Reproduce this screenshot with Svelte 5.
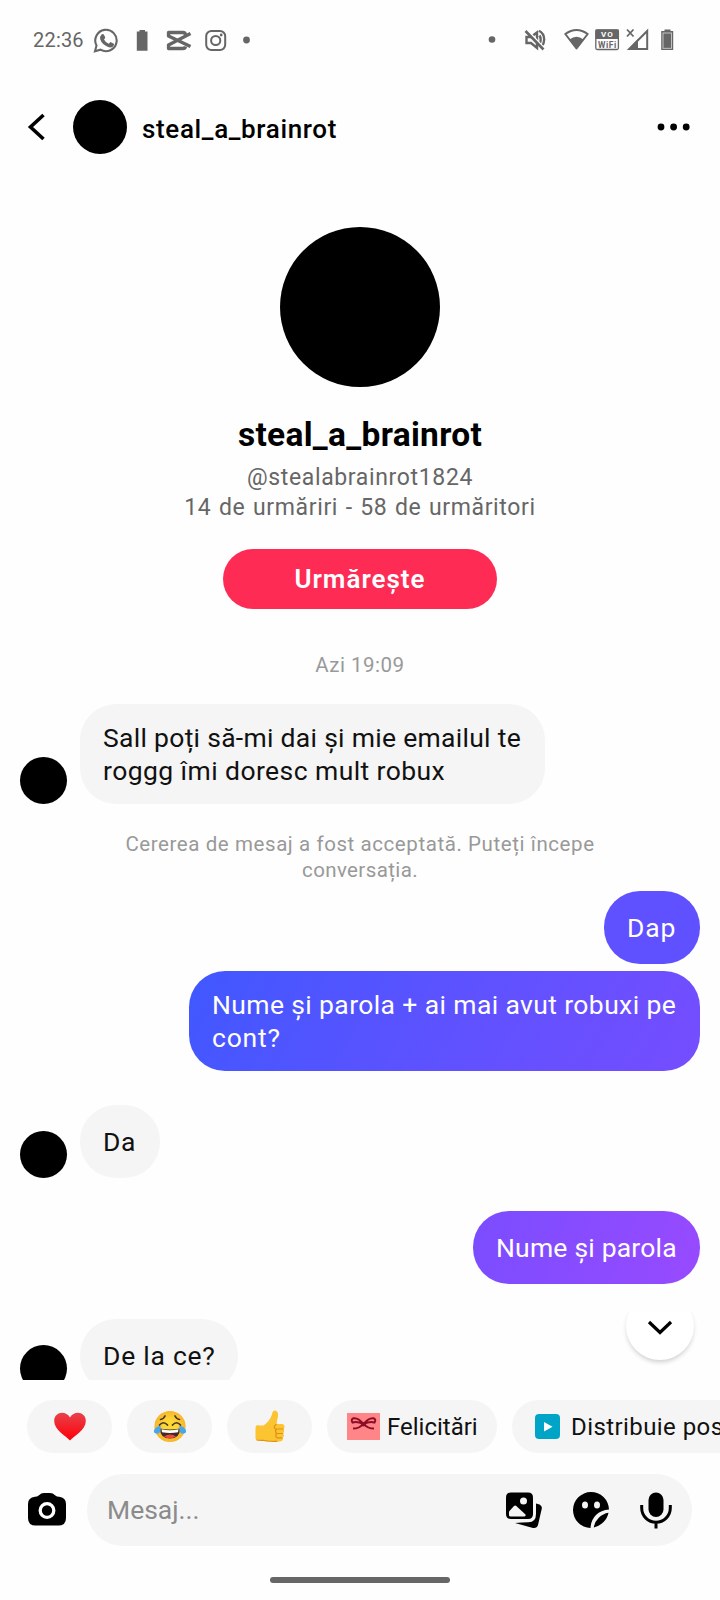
<script>
  const quick = ['heart', 'joy', 'thumb'];
</script>

{#snippet mine(text, kind)}
  <div class="row right"><div class="bubble mine {kind}"><span>{text}</span></div></div>
{/snippet}

<div class="screen">
  <header class="status">
    <span class="time">22:36</span>
    <svg class="i-left" width="160" height="26" viewBox="92 27 160 26" fill="none" stroke="#666">
      <path d="M95 51.200L96.500 45.500A10.700 10.700 0 1 1 100.500 49.700Z" stroke-width="2.100" />
      <path d="M101.500 34.600q1.300-1.300 2.300-.2l1.400 2.900q.2.700-1.200 2.200 1.600 3.100 4.800 4.300l1.600-1.700 3.500 1.700q.7.700-.8 2.700-2.300 1.700-5.600.2-5.600-2.500-7.300-7.500-.5-2.700 1.300-4.600z" fill="#666" stroke="none" />
      <path d="M139.500 31.500v-1.600h5.500v1.600h2.500v19.200h-10.700v-19.200z" fill="#666" stroke="none" />
      <path d="M190.500 33.500L168.500 45v3.500h14.500q2 0 2.500-2M190.500 46.500L168.500 36v-3.500h14.500q2 0 2.500 2" stroke-width="3.300" stroke-linejoin="round" />
      <rect x="206.200" y="31" width="19" height="19" rx="5.200" stroke-width="2" />
      <circle cx="215.700" cy="40.500" r="4.600" stroke-width="2" /><circle cx="221.200" cy="35" r="1.400" fill="#666" stroke="none" />
      <circle cx="246.500" cy="40" r="3.400" fill="#666" stroke="none" />
    </svg>
    <svg class="i-right" width="190" height="26" viewBox="487 27 190 26" fill="none" stroke="#666">
      <circle cx="492" cy="39.500" r="3.300" fill="#666" stroke="none" />
      <path d="M526.500 37h4.500l6-4.500v15.500l-6-5h-4.500zM539.500 35.500q2.500 4 0 8.500M539 30.800q5 2.500 5.200 8.700 0 4-2.500 6.500" stroke-width="2.400" />
      <path d="M527 30l18 19" stroke="#fefefe" stroke-width="2" /><path d="M525.500 31l18 18.500" stroke-width="2.600" />
      <path d="M565.300 34Q576.500 26 587.700 34L576.500 48.500z" stroke-width="2" stroke-linejoin="round" />
      <path d="M569.500 39.500q7-5.500 14 0l-7 9.500z" fill="#666" stroke="none" />
      <rect x="595.800" y="30" width="22.600" height="19.500" rx="1.500" stroke-width="1.300" />
      <path d="M595.500 29.500h23.200v9.500h-23.200z" fill="#666" stroke="none" />
      <text x="607.400" y="37.300" fill="#fff" stroke="none" class="vo">VO</text>
      <text x="607.400" y="47.800" fill="#666" stroke="none" class="wf">WiFi</text>
      <path d="M647.200 31v18h-18z" stroke-width="2" /><path d="M628 50l10-11v11z" fill="#666" stroke="none" />
      <path d="M627 29.500l6.500 7M633.500 29.500l-6.500 7" stroke-width="1.800" />
      <path d="M664.500 31v-1.500h6v1.500h2.700v19h-12v-19z" fill="#666" stroke="none" /><rect x="663" y="33" width="8.500" height="15.300" stroke="#ccc" stroke-width=".9" />
    </svg>
  </header>

  <nav class="top">
    <svg class="back" width="20" height="30" viewBox="0 0 20 30"><path d="M17.500 3L4.500 15l13 12" fill="none" stroke="#000" stroke-width="3.600" /></svg>
    <i class="avatar head"></i>
    <b class="title">steal_a_brainrot</b>
    <svg class="more" width="34" height="8" viewBox="0 0 34 8"><circle cx="4" cy="4" r="3.400" /><circle cx="16.600" cy="4" r="3.400" /><circle cx="29.200" cy="4" r="3.400" /></svg>
  </nav>

  <main>
    <section class="profile">
      <i class="avatar big"></i>
      <h1>steal_a_brainrot</h1>
      <p class="handle">@stealabrainrot1824</p>
      <p class="counts">14 de urmăriri - 58 de urmăritori</p>
      <button class="follow">Urmărește</button>
      <p class="date">Azi 19:09</p>
    </section>

    <div class="row">
      <i class="avatar small"></i>
      <div class="bubble w-sall"><span class="m1">Sall poți să-mi dai și mie emailul te</span><br /><span class="m2">roggg îmi doresc mult robux</span></div>
    </div>
    <p class="notice"><span class="n1">Cererea de mesaj a fost acceptată. Puteți începe</span><br /><span class="n2">conversația.</span></p>
    {@render mine('Dap', 'dap')}
    <div class="row right second"><div class="bubble mine long"><span>Nume și parola + ai mai avut robuxi pe</span><br /><span class="cont">cont?</span></div></div>
    <div class="row da"><i class="avatar small"></i><div class="bubble w-da">Da</div></div>
    {@render mine('Nume și parola', 'np')}
    <div class="row last"><i class="avatar small"></i><div class="bubble w-ce">De la ce?</div></div>
    <div class="jump"><svg width="28" height="18" viewBox="0 0 28 18"><path d="M3 3l11 10.500L25 3" fill="none" stroke="#000" stroke-width="3.200" /></svg></div>
  </main>

  <div class="chips">
    {#each quick as q}
      <button class="chip emoji">
        <svg width="36" height="36" viewBox="0 0 36 36">
          {#if q === 'heart'}
            <defs><linearGradient id="hg" x2="0" y2="1"><stop stop-color="#e8414b" /><stop offset="1" stop-color="#ff0008" /></linearGradient></defs>
            <path d="M18 31.500C14 27 2.200 21 2.200 12 2.200 3 13.500.8 18 8.500 22.500.8 33.800 3 33.800 12 33.800 21 22 27 18 31.500z" fill="url(#hg)" />
          {:else if q === 'joy'}
            <defs><radialGradient id="jg"><stop offset=".4" stop-color="#fdd835" /><stop offset="1" stop-color="#f6b52c" /></radialGradient></defs>
            <circle cx="18" cy="17.500" r="15.600" fill="url(#jg)" />
            <path d="M8.500 10.500q3-.3 4.500-3.500M27.500 10.500q-3-.3-4.500-3.500M7.500 16q4-4.500 8 0M20.500 16q4-4.500 8 0" fill="none" stroke="#4b3426" stroke-width="1.700" stroke-linecap="round" />
            <path d="M8 19.500q10 2 20 0 0 10-10 10T8 19.500z" fill="#422b27" /><path d="M9.500 20.200q8.500 2 17 0l-.5 3q-8 1.500-16 0z" fill="#fff" /><path d="M12 27.500q6-4 12 0-6 4-12 0z" fill="#ef4b38" />
            <path d="M8.500 16.500q1 8-3.500 8.300-4.500-.5-2.500-4.500 1.500-2.500 6-3.800zM27.500 16.500q-1 8 3.500 8.300 4.500-.5 2.500-4.500-1.500-2.500-6-3.800z" fill="#47a7ee" />
          {:else}
            <path d="M3.500 19q0-2.500 2-3 3 .8 6 .5 6-4 8.500-11 .5-4 3-4 3.500.5 3 5.500l-1.500 8h5.500q2.700.3 2.500 3-.1 1.300-.8 2 1.300 2.300-.3 4.300 1.200 2.500-.5 4.300.7 3.500-3 3.900H17q-4.500 0-7-1.200H5.500q-2 0-2-2z" fill="#fdc432" />
            <path d="M24.500 15l-2 2q-1 3 2 3h6.700M31.500 20h-7q-2 2.200 0 4.500h6.500M24.500 24.500q-1.700 2 .3 4.300h5.500M4.500 31q3 .5 7 .3 3 1.200 14 1" fill="none" stroke="#dd9217" stroke-width="1.200" />
          {/if}
        </svg>
      </button>
    {/each}
    <button class="chip gift">
      <svg width="33" height="27" viewBox="0 0 33 27"><path d="M0 0h33v27H0z" fill="#ff8589" /><path d="M16.500 11Q11 4.500 6.500 5.300 3.500 6.500 5.500 9.500 10 8 16.500 11zM16.500 11Q22 4.500 26.500 5.300 29.500 6.500 27.500 9.500 23 8 16.500 11zM15.500 11.500q-3 4-9.500 4M17.500 11.500q3 4 9.500 4" fill="none" stroke="#8e0d25" stroke-width="2" /><circle cx="16.500" cy="11.200" r="2.300" fill="#8e0d25" /></svg>
      <span>Felicitări</span>
    </button>
    <button class="chip share">
      <svg width="25" height="25" viewBox="0 0 25 25"><rect width="25" height="25" rx="4" fill="#00a4c6" /><path d="M9 8v9.500l8.500-4.700z" fill="#fff" /></svg>
      <span>Distribuie pos</span>
    </button>
  </div>

  <footer class="composer">
    <svg class="camera" width="38" height="33" viewBox="0 0 38 33"><path d="M0 11q0-6.500 7-7.200 2 0 4-1.600Q13 0 16 0h6q3 0 5 2.200 2 1.600 4 1.600 7 .7 7 7.200v14q0 7.500-7.500 7.500h-23Q0 32.500 0 25z" /><circle cx="19" cy="17.500" r="6.800" fill="none" stroke="#fff" stroke-width="3.300" /></svg>
    <div class="field">
      <span class="ph">Mesaj...</span>
      <svg width="36" height="37" viewBox="0 0 36 37">
        <path d="M5 .5h17q5 0 5 5V22q0 5-5 5H5q-5 0-5-5V5.500q0-5 5-5z" /><circle cx="17.500" cy="9" r="3.500" fill="#f5f5f5" /><path d="M3 23.500v-4l5-5.500q1.200-1 2.300 0l9.200 8.500q.7 1.500-1 2H4.500q-1 0-1.500-1z" fill="#f5f5f5" />
        <path d="M30 11.500l3.500 1q2.700 1.300 2.300 4L32 33q-1 3.500-5 3L9 31q7-.5 13.500-.7Q30 30 30 22z" />
      </svg>
      <svg width="36" height="36" viewBox="0 0 36 36"><path d="M17.500 36A18 18 0 1 1 36 17.500q-8 .5-13 5.500t-5.500 13z" /><path d="M20.800 35.500q.7-5.500 5-9.700t9.700-5q-1 5.500-5.200 9.500t-9.500 5.200z" /><ellipse cx="12" cy="13" rx="3" ry="3.500" fill="#f5f5f5" /><ellipse cx="24" cy="13" rx="3" ry="3.500" fill="#f5f5f5" /></svg>
      <svg width="32" height="37" viewBox="0 0 32 37"><rect x="8.500" y=".5" width="15" height="24.500" rx="7.500" /><path d="M1.700 13v3a14.300 14.300 0 0 0 28.600 0v-3M16 30v6.500" fill="none" stroke="#000" stroke-width="3" /></svg>
    </div>
  </footer>
  <div class="home"></div>
</div>

<style>
  :global(body) { margin: 0; background: #fefefe; }
  .screen { width: 720px; height: 1600px; overflow: hidden; background: #fefefe; display: flex; flex-direction: column; font-family: Roboto, "Liberation Sans", sans-serif; color: #111; }
  p, h1 { margin: 0; white-space: nowrap; }
  svg { display: block; flex: none; }
  button { border: 0; padding: 0; font: inherit; color: inherit; }
  .status { height: 80px; display: flex; align-items: center; padding: 0 43px 0 33px; flex: none; }
  .time { font-size: 20px; color: #666; width: 59px; letter-spacing: .2px; }
  .i-right { margin-left: auto; }
  .vo { font: bold 8px Roboto, sans-serif; text-anchor: middle; letter-spacing: 1px; }
  .wf { font: bold 8.500px Roboto, sans-serif; text-anchor: middle; letter-spacing: .6px; }
  .top { height: 94px; flex: none; display: flex; align-items: center; padding: 0 29px 0 26px; }
  .avatar { display: block; border-radius: 50%; background: #000; flex: none; }
  .head { width: 54px; height: 54px; margin: 0 15px 0 27px; }
  .title { font-weight: 500; font-size: 26px; letter-spacing: .65px; padding-top: 4px; color: #000; }
  .more { margin-left: auto; }
  main { height: 1206px; flex: none; overflow: hidden; position: relative; display: flex; flex-direction: column; }
  .profile { display: flex; flex-direction: column; align-items: center; height: 530px; flex: none; }
  .big { width: 160px; height: 160px; margin-top: 53px; }
  h1 { font-weight: 700; font-size: 33.500px; line-height: 40px; margin-top: 28px; color: #000; letter-spacing: .3px; }
  .handle, .counts { font-size: 23px; line-height: 30px; color: #666; letter-spacing: .65px; }
  .counts { word-spacing: 1.200px; }
  .handle { margin-top: 8px; }
  .follow { width: 274px; height: 60px; border-radius: 30px; background: #fe2c55; color: #fff; font-size: 26px; font-weight: 600; margin-top: 26px; letter-spacing: 1px; }
  .date { font-size: 20.500px; line-height: 26px; color: #999; margin-top: 43px; letter-spacing: .5px; }
  .row { display: flex; align-items: flex-end; padding: 0 20px; flex: none; }
  .right { justify-content: flex-end; }
  .small { width: 47px; height: 47px; margin-right: 13px; }
  .bubble { box-sizing: border-box; background: #f5f5f5; border-radius: 36px; padding: 20px 0 16px 23px; font-size: 26.500px; line-height: 33px; white-space: nowrap; min-height: 73px; display: block; }
  .bubble.w-sall, .bubble.long { padding-top: 17px; padding-bottom: 17px; }
  .w-sall { width: 465px; }
  .m1 { letter-spacing: .29px; }
  .m2 { letter-spacing: .42px; }
  .mine { color: #fff; }
  .notice { text-align: center; font-size: 20.500px; line-height: 25.500px; color: #999; margin: 28px 0 8px; height: 51px; }
  .n1 { letter-spacing: .58px; }
  .n2 { letter-spacing: .38px; }
  .bubble.dap { background: #5f51ff; width: 96px; letter-spacing: .9px; }
  .second { margin-top: 7px; }
  .long { width: 511px; letter-spacing: .38px; background: linear-gradient(120deg, #4058ff, #5d52ff 50%, #754dff); }
  .cont { letter-spacing: .8px; }
  .da { margin: 34px 0 33px; }
  .w-da { width: 80px; letter-spacing: .6px; }
  .np { width: 227px; letter-spacing: .2px; background: linear-gradient(110deg, #7a4dff, #984aff); }
  .last { margin-top: 35px; }
  .w-ce { width: 158px; letter-spacing: .75px; }
  .jump { position: absolute; left: 626px; top: 1118px; width: 68px; height: 68px; border-radius: 50%; background: #fff; box-shadow: 0 3px 5px -1px #0003; display: flex; justify-content: center; padding-top: 27px; box-sizing: border-box; clip-path: inset(20px -10px -12px -10px); }
  .chips { display: flex; gap: 15px; padding: 20px 0 0 27px; height: 74px; box-sizing: border-box; flex: none; }
  .chip { height: 53px; border-radius: 27px; background: #f5f5f6; display: flex; align-items: center; flex: none; font-size: 24px; white-space: nowrap; }
  .emoji { width: 85px; justify-content: center; }
  .gift { width: 170px; padding-left: 20px; gap: 7px; }
  .share { width: 300px; padding-left: 23px; gap: 11px; letter-spacing: .42px; }
  .composer { display: flex; align-items: center; height: 72px; margin-top: 20px; padding-left: 28px; flex: none; }
  .camera { margin-bottom: 2px; }
  .field { width: 605px; height: 72px; margin-left: 21px; border-radius: 36px; background: #f5f5f5; display: flex; align-items: center; gap: 31px; padding: 0 20px 0 20px; box-sizing: border-box; }
  .ph { font-size: 26.500px; color: #8b8b8b; margin: 0 auto 2px 0; }
  .home { width: 180px; height: 6px; border-radius: 3px; background: #666; margin: 31px auto 0; flex: none; }
</style>
